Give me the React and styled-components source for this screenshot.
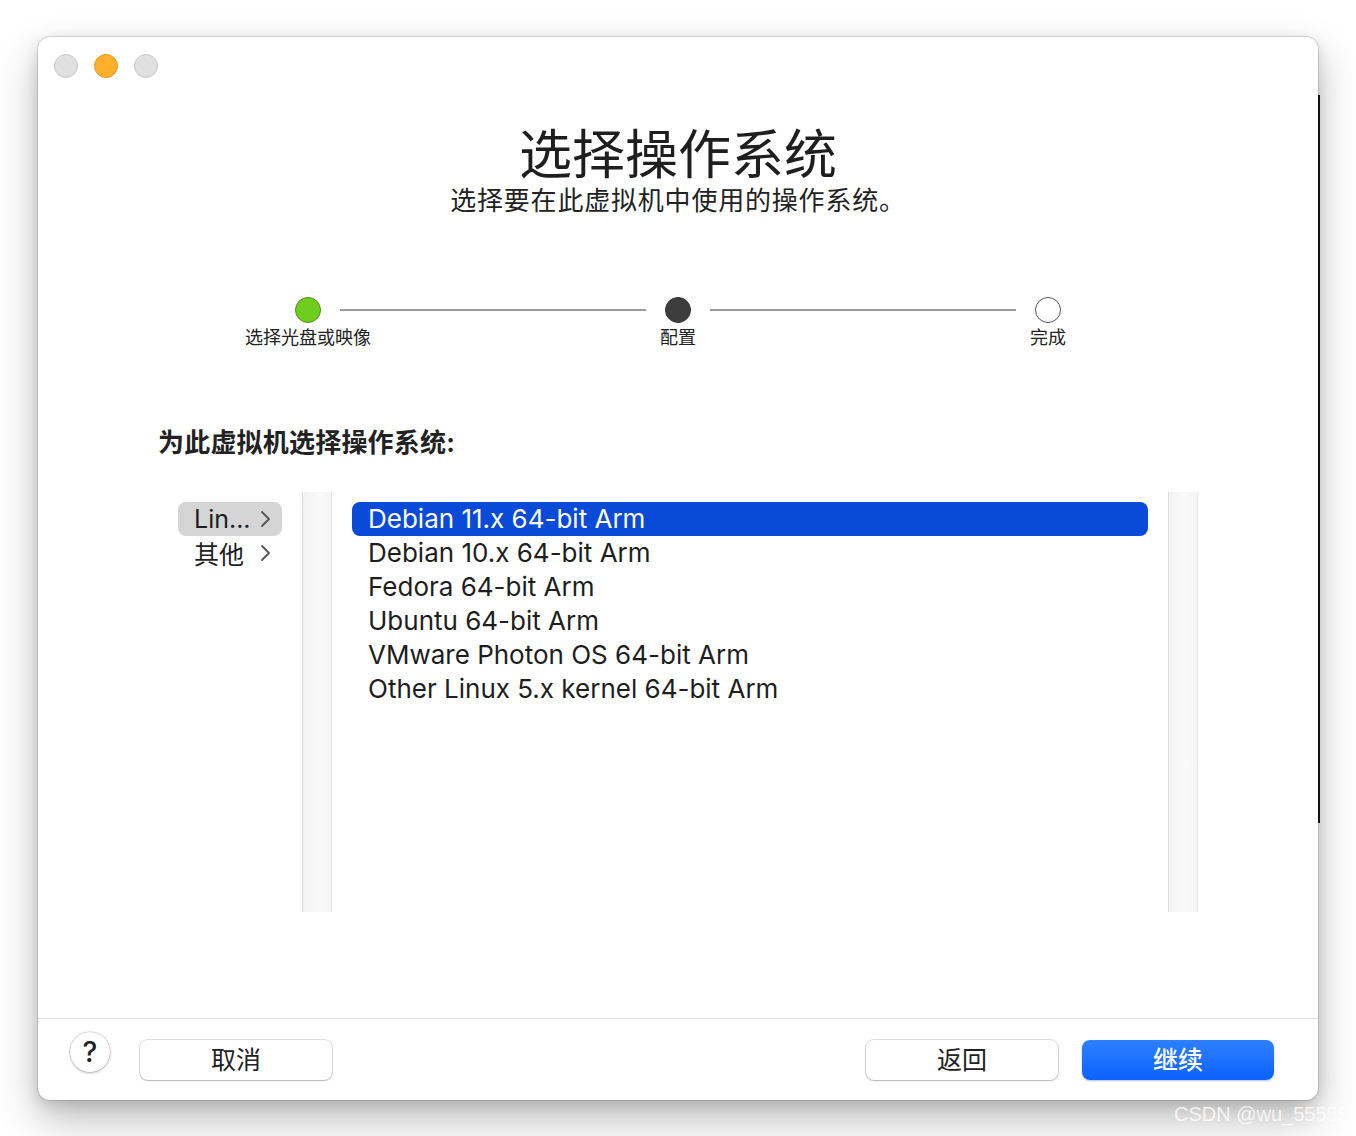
import React, { useState } from 'react'
import styled, { createGlobalStyle, css } from 'styled-components'

const FONT = `Inter, "Noto Sans CJK SC", "Noto Sans", sans-serif`

const STEPS = [
  { label: '选择光盘或映像', state: 'done' },
  { label: '配置', state: 'current' },
  { label: '完成', state: 'todo' }
]

const CATEGORIES = ['Lin...', '其他']

const SYSTEMS = [
  'Debian 11.x 64-bit Arm',
  'Debian 10.x 64-bit Arm',
  'Fedora 64-bit Arm',
  'Ubuntu 64-bit Arm',
  'VMware Photon OS 64-bit Arm',
  'Other Linux 5.x kernel 64-bit Arm'
]

const GlobalStyle = createGlobalStyle`
  html, body {
    margin: 0;
    padding: 0;
    background: #ffffff;
  }
  * {
    box-sizing: border-box;
  }
`

const Chevron = () => (
  <svg width='11' height='18' viewBox='0 0 11 18' fill='none'>
    <path d='M2 2l7 7-7 7' stroke='#555' strokeWidth='1.8' strokeLinecap='round' strokeLinejoin='round' />
  </svg>
)

const App = () => {
  const [category, setCategory] = useState(0)
  const [selected, setSelected] = useState(0)

  return (
    <Page>
      <GlobalStyle />
      <Window>
        <TitleBar>
          <Light />
          <Light color='orange' />
          <Light />
        </TitleBar>

        <Header>
          <Title>选择操作系统</Title>
          <Subtitle>选择要在此虚拟机中使用的操作系统。</Subtitle>
        </Header>

        <Stepper>
          {STEPS.map((step, i) => (
            <React.Fragment key={step.label}>
              {i > 0 && <StepLine />}
              <Step>
                <StepDot state={step.state} />
                <StepLabel>{step.label}</StepLabel>
              </Step>
            </React.Fragment>
          ))}
        </Stepper>

        <SectionTitle>为此虚拟机选择操作系统:</SectionTitle>

        <Browser>
          <CategoryColumn>
            {CATEGORIES.map((name, i) => (
              <Category key={name} active={i === category} onClick={() => setCategory(i)}>
                <span>{name}</span>
                <Chevron />
              </Category>
            ))}
          </CategoryColumn>
          <Strip />
          <SystemList>
            {SYSTEMS.map((name, i) => (
              <SystemRow key={name} active={i === selected} onClick={() => setSelected(i)}>
                {name}
              </SystemRow>
            ))}
          </SystemList>
          <Strip />
        </Browser>

        <Footer>
          <HelpButton>?</HelpButton>
          <Button>取消</Button>
          <Spacer />
          <Button>返回</Button>
          <Button primary>继续</Button>
        </Footer>

        <EdgeLine />
      </Window>
      <Watermark>CSDN @wu_55555</Watermark>
    </Page>
  )
}

const Page = styled.div`
  position: relative;
  width: 1356px;
  height: 1136px;
  padding: 37px 38px;
  overflow: hidden;
  font-family: ${FONT};
  color: #222;
`

const Window = styled.div`
  position: relative;
  width: 1280px;
  height: 1063px;
  background: #fff;
  border-radius: 12px;
  display: flex;
  flex-direction: column;
  box-shadow: 0 0 0 1px rgba(0, 0, 0, 0.12), 0 18px 40px rgba(0, 0, 0, 0.28), 0 4px 14px rgba(0, 0, 0, 0.12);
`

const EdgeLine = styled.div`
  position: absolute;
  right: -2px;
  top: 58px;
  width: 2px;
  height: 728px;
  background: #111;
`

const TitleBar = styled.div`
  height: 58px;
  display: flex;
  align-items: center;
  gap: 16px;
  padding-left: 16px;
`

const Light = styled.div`
  width: 24px;
  height: 24px;
  border-radius: 50%;
  ${({ color }) =>
    color === 'orange'
      ? css`
          background: #fdb02b;
          border: 1px solid #e09b22;
        `
      : css`
          background: #e0e0e0;
          border: 1px solid #c9c9c9;
        `}
`

const Header = styled.div`
  display: flex;
  flex-direction: column;
  align-items: center;
  margin-top: 30px;
`

const Title = styled.h1`
  margin: 0;
  font-size: 53px;
  line-height: 60px;
  font-weight: 400;
  color: #1e1e1e;
`

const Subtitle = styled.div`
  font-size: 26px;
  line-height: 32px;
  letter-spacing: 0.8px;
  color: #222;
`

const Stepper = styled.div`
  display: flex;
  align-items: flex-start;
  margin: 80px 0 0 257px;
  width: 766px;
`

const Step = styled.div`
  width: 26px;
  display: flex;
  flex-direction: column;
  align-items: center;
`

const StepDot = styled.div`
  width: 26px;
  height: 26px;
  border-radius: 50%;
  ${({ state }) =>
    state === 'done'
      ? css`
          background: #6fcd1f;
          border: 1px solid #4f8f1c;
        `
      : state === 'current'
      ? css`
          background: #3c3c3c;
          border: 1px solid #333;
        `
      : css`
          background: #fff;
          border: 1.5px solid #555;
        `}
`

const StepLabel = styled.div`
  margin-top: 4px;
  font-size: 18px;
  line-height: 22px;
  white-space: nowrap;
  color: #222;
`

const StepLine = styled.div`
  flex: 1;
  height: 2px;
  margin: 12px 19px 0;
  background: #9b9b9b;
`

const SectionTitle = styled.div`
  margin: 78px 0 0 120px;
  font-size: 26px;
  line-height: 32px;
  letter-spacing: 0.2px;
  font-weight: 700;
  color: #222;
`

const Browser = styled.div`
  display: flex;
  height: 420px;
  margin: 33px 0 0 140px;
`

const CategoryColumn = styled.div`
  width: 124px;
  padding-top: 10px;
  display: flex;
  flex-direction: column;
`

const Category = styled.div`
  width: 104px;
  height: 34px;
  display: flex;
  align-items: center;
  justify-content: space-between;
  padding: 0 11px 0 16px;
  border-radius: 8px;
  font-size: 25px;
  color: #1e1e1e;
  cursor: default;
  background: ${({ active }) => (active ? '#d5d5d5' : 'transparent')};
`

const Strip = styled.div`
  width: 30px;
  background: linear-gradient(to right, #f3f3f3, #fafafa 60%, #f4f4f4);
  border-left: 1px solid #dcdcdc;
  border-right: 1px solid #e6e6e6;
`

const SystemList = styled.div`
  width: 836px;
  padding: 10px 20px 0 20px;
  display: flex;
  flex-direction: column;
`

const SystemRow = styled.div`
  height: 34px;
  line-height: 34px;
  padding-left: 16px;
  border-radius: 8px;
  font-size: 26px;
  white-space: nowrap;
  cursor: default;
  ${({ active }) =>
    active
      ? css`
          background: #0a4ad8;
          color: #fff;
        `
      : css`
          color: #1e1e1e;
        `}
`

const Footer = styled.div`
  margin-top: auto;
  height: 82px;
  border-top: 1px solid #dedede;
  display: flex;
  align-items: flex-start;
  padding: 13px 44px 0 32px;
  gap: 24px;
`

const HelpButton = styled.div`
  width: 40px;
  height: 40px;
  margin-right: 6px;
  border-radius: 50%;
  background: #fff;
  box-shadow: 0 0 0 0.5px rgba(0, 0, 0, 0.2), 0 1px 3px rgba(0, 0, 0, 0.25);
  display: flex;
  align-items: center;
  justify-content: center;
  font-size: 28px;
  font-weight: 500;
  color: #222;
`

const Spacer = styled.div`
  flex: 1;
`

const Button = styled.div`
  width: 192px;
  height: 40px;
  margin-top: 8px;
  padding-bottom: 4px;
  border-radius: 8px;
  display: flex;
  align-items: center;
  justify-content: center;
  font-size: 25px;
  ${({ primary }) =>
    primary
      ? css`
          background: linear-gradient(to bottom, #2f80ff, #0a62ff);
          color: #fff;
          font-weight: 500;
          box-shadow: 0 1px 2px rgba(0, 40, 160, 0.3);
        `
      : css`
          background: #fff;
          color: #222;
          box-shadow: 0 0 0 1px rgba(0, 0, 0, 0.12), 0 1px 2px rgba(0, 0, 0, 0.2);
        `}
`

const Watermark = styled.div`
  position: absolute;
  left: 1174px;
  top: 1103px;
  font-family: "Liberation Sans", sans-serif;
  font-size: 20px;
  color: rgba(255, 255, 255, 0.75);
  white-space: nowrap;
`

export default App
